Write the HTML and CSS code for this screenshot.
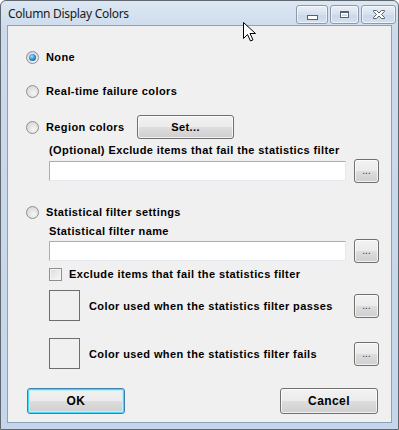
FILE: index.html
```html
<!DOCTYPE html>
<html lang="en">
<head>
  <meta charset="UTF-8">
  <title>Column Display Colors</title>
  <link rel="stylesheet" href="styles.css">
</head>
<body>
  <div class="ventana">
    <div class="titulo">
      <span class="titulo-texto">Column Display Colors</span>
      <div class="controles">
        <button class="ctrl min"><span class="raya"></span></button>
        <button class="ctrl max"><span class="cuadro"></span></button>
        <button class="ctrl cerrar">
          <svg width="14" height="11" viewBox="0 0 14 11">
            <path d="M1.5 1.5h3l2.5 2.5 2.5-2.5h3v1l-3 3 3 3v1h-3l-2.5-2.5-2.5 2.5h-3v-1l3-3-3-3z" fill="#fff" stroke="#58606b" stroke-width="1"/>
          </svg>
        </button>
      </div>
    </div>

    <div class="cliente">
      <label class="fila radio-fila f1"><span class="radio activo"></span>None</label>
      <label class="fila radio-fila f2"><span class="radio"></span>Real-time failure colors</label>
      <div class="fila f3">
        <label class="radio-fila region"><span class="radio"></span>Region colors</label>
        <button class="boton set">Set...</button>
      </div>

      <div class="sangria">
        <div class="etiqueta e1">(Optional) Exclude items that fail the statistics filter</div>
        <div class="campo-fila c1">
          <div class="caja"></div>
          <button class="boton puntos">...</button>
        </div>
      </div>

      <label class="fila radio-fila f4"><span class="radio"></span>Statistical filter settings</label>

      <div class="sangria">
        <div class="etiqueta e2">Statistical filter name</div>
        <div class="campo-fila c2">
          <div class="caja"></div>
          <button class="boton puntos">...</button>
        </div>
        <label class="check-fila"><span class="check"></span>Exclude items that fail the statistics filter</label>
        <div class="color-fila k1">
          <div class="muestra"></div>
          <span class="color-texto">Color used when the statistics filter passes</span>
          <button class="boton puntos">...</button>
        </div>
        <div class="color-fila k2">
          <div class="muestra"></div>
          <span class="color-texto">Color used when the statistics filter fails</span>
          <button class="boton puntos">...</button>
        </div>
      </div>

      <div class="acciones">
        <button class="boton grande foco">OK</button>
        <button class="boton grande">Cancel</button>
      </div>
    </div>

    <!-- puntero del raton -->
    <svg class="cursor" width="13" height="20" viewBox="0 0 13 20">
      <path d="M0.5 0.5v16l4-4 3 6.5 2.5-1.2-3-6.3h5.5z" fill="#fff" stroke="#000" stroke-width="1"/>
    </svg>
  </div>
</body>
</html>
```

FILE: styles.css
```css
html, body {
  margin: 0;
  padding: 0;
  background: #fff;
}
.ventana {
  position: relative;
  width: 399px;
  height: 430px;
  box-sizing: border-box;
  border: 1px solid #5f6770;
  border-radius: 6px 6px 0 0;
  background: linear-gradient(#dde7f3, #cbdaec 30px, #c6d6ea);
  display: flex;
  flex-direction: column;
  font-family: "Liberation Sans", Arial, sans-serif;
}
.titulo {
  height: 24px;
  display: flex;
  align-items: flex-start;
  justify-content: space-between;
  padding: 0 2px 0 7px;
}
.titulo-texto {
  font-family: "Noto Sans", "Open Sans", sans-serif;
  font-size: 12px;
  letter-spacing: -0.3px;
  color: #1a1a1a;
  line-height: 26px;
}
.controles {
  display: flex;
  gap: 2px;
  margin-top: 4px;
}
.ctrl {
  height: 19px;
  padding: 0;
  border: 1px solid #8a99ad;
  border-radius: 3px;
  background: linear-gradient(#e9f0f8, #d5e0ee 50%, #c9d7ea 51%, #d3e0f0);
  display: flex;
  align-items: center;
  justify-content: center;
  box-shadow: inset 0 0 0 1px rgba(255,255,255,0.6);
}
.min { width: 32px; }
.max { width: 29px; }
.cerrar { width: 35px; }
.raya {
  width: 9px;
  height: 3px;
  border: 1px solid #58606b;
  background: #fff;
  margin-top: 5px;
}
.cuadro {
  width: 7px;
  height: 4px;
  border: 1px solid #58606b;
  border-top-width: 2px;
  box-shadow: inset 0 0 0 1px #fff;
}
.cliente {
  flex: 1;
  margin: 0 6px 6px 6px;
  border: 1px solid #8ea1b8;
  background: #f0f0f0;
  padding: 0 12px 0 18px;
  display: flex;
  flex-direction: column;
  font-size: 11px;
  font-weight: bold;
  letter-spacing: 0.4px;
  color: #000;
}
.fila {
  display: flex;
  align-items: center;
}
.radio-fila {
  display: flex;
  align-items: center;
  height: 20px;
}
.radio {
  width: 11px;
  height: 11px;
  border-radius: 50%;
  border: 1px solid #8e8f8f;
  background: radial-gradient(circle at 60% 65%, #f6f6f6, #cfcfcf);
  margin-right: 7px;
  box-sizing: content-box;
  position: relative;
}
.radio.activo::after {
  content: "";
  position: absolute;
  left: 2px;
  top: 2px;
  width: 7px;
  height: 7px;
  border-radius: 50%;
  background: radial-gradient(circle at 40% 35%, #9fe0ff, #1c7cc7 60%, #0e4c88);
}
.f1 { margin-top: 21px; }
.f2 { margin-top: 14px; }
.f3 { margin-top: 14px; height: 24px; }
.f4 { margin-top: 19px; }
.region {
  width: 111px;
}
.set {
  width: 97px;
  height: 24px;
}
.boton {
  font-family: "Liberation Sans", Arial, sans-serif;
  font-size: 11px;
  font-weight: bold;
  letter-spacing: 0.4px;
  color: #000;
  border: 1px solid #707070;
  border-radius: 3px;
  background: linear-gradient(#f2f2f2, #ebebeb 50%, #dddddd 51%, #cfcfcf);
  box-shadow: inset 0 0 0 1px rgba(255,255,255,0.7);
  padding: 0;
}
.sangria {
  margin-left: 23px;
  display: flex;
  flex-direction: column;
}
.etiqueta {
  height: 14px;
  line-height: 14px;
}
.e1 { margin-top: 4px; }
.e2 { margin-top: 2px; }
.campo-fila {
  display: flex;
  align-items: center;
  gap: 8px;
}
.c1 { margin-top: 1px; height: 25px; }
.c2 { margin-top: 1px; height: 24px; }
.caja {
  flex: 1;
  height: 20px;
  box-sizing: border-box;
  border: 1px solid #abadb3;
  border-right-color: #e3e9ef;
  border-bottom-color: #e3e9ef;
  background: #fff;
}
.puntos {
  width: 25px;
  height: 24px;
  font-weight: normal;
  font-size: 10px;
  letter-spacing: 0;
  line-height: 22px;
  color: #333;
}
.check-fila {
  display: flex;
  align-items: center;
  height: 14px;
  margin-top: 4px;
}
.check {
  width: 11px;
  height: 11px;
  border: 1px solid #8e8f8f;
  background: linear-gradient(135deg, #dcdcdc, #f8f8f8);
  box-shadow: inset 0 0 0 1px #f4f4f4;
  margin-right: 7px;
}
.color-fila {
  display: flex;
  align-items: center;
  height: 31px;
}
.k1 { margin-top: 9px; }
.k2 { margin-top: 17px; }
.muestra {
  width: 29px;
  height: 29px;
  border: 1px solid #6d6d6d;
}
.color-texto {
  flex: 1;
  margin-left: 9px;
}
.acciones {
  display: flex;
  justify-content: space-between;
  margin-top: 19px;
  padding: 0 1px 0 1px;
}
.grande {
  width: 98px;
  height: 26px;
  font-size: 12px;
}
.foco {
  border-color: #3c7fb1;
  box-shadow: inset 0 0 0 1px #48d8fb, inset 0 0 0 2px #c2effc;
}
.cursor {
  position: absolute;
  left: 242px;
  top: 21px;
}
```
